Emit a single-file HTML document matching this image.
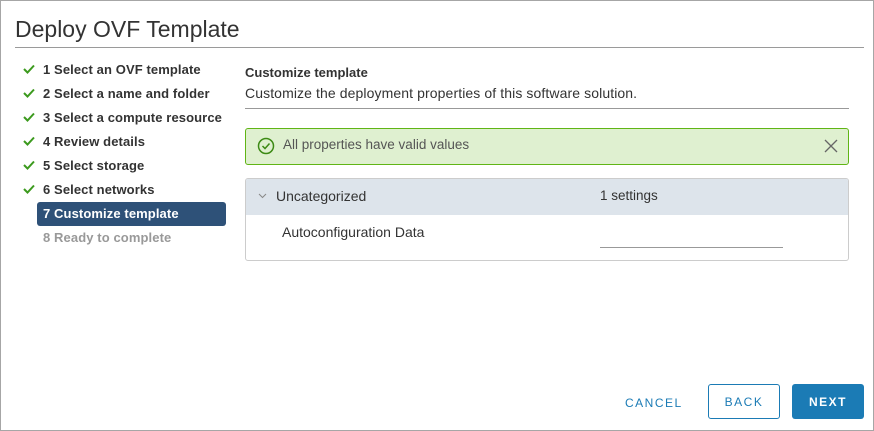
<!DOCTYPE html>
<html><head><style>
body{margin:0;width:874px;height:431px;font-family:"Liberation Sans",sans-serif;background:#fff;position:relative;overflow:hidden;color:#333}
.frame{position:absolute;left:0;top:0;width:872px;height:429px;border:1px solid #a6a6a6}
.abs{position:absolute;white-space:nowrap}
.step{position:absolute;left:43px;font-size:13px;color:#333;font-weight:bold;letter-spacing:0.1px}
.chk{position:absolute;left:23px}
</style></head><body>
<div class="frame"></div>
<div class="abs" style="left:15px;top:16px;font-size:23px;color:#333;">Deploy OVF Template</div>
<div class="abs" style="left:15px;top:47px;width:849px;height:1px;background:#9a9a9a"></div>

<div style="position:absolute;left:37px;top:202px;width:189px;height:24px;background:#2e5178;border-radius:3px"></div>
<svg class="chk" style="top:64px" width="12" height="10"><path d="M1 5 L4.5 8.5 L11 1.5" stroke="#3c9a1e" stroke-width="2" fill="none"/></svg>
<svg class="chk" style="top:88px" width="12" height="10"><path d="M1 5 L4.5 8.5 L11 1.5" stroke="#3c9a1e" stroke-width="2" fill="none"/></svg>
<svg class="chk" style="top:112px" width="12" height="10"><path d="M1 5 L4.5 8.5 L11 1.5" stroke="#3c9a1e" stroke-width="2" fill="none"/></svg>
<svg class="chk" style="top:136px" width="12" height="10"><path d="M1 5 L4.5 8.5 L11 1.5" stroke="#3c9a1e" stroke-width="2" fill="none"/></svg>
<svg class="chk" style="top:160px" width="12" height="10"><path d="M1 5 L4.5 8.5 L11 1.5" stroke="#3c9a1e" stroke-width="2" fill="none"/></svg>
<svg class="chk" style="top:184px" width="12" height="10"><path d="M1 5 L4.5 8.5 L11 1.5" stroke="#3c9a1e" stroke-width="2" fill="none"/></svg>
<div class="step" style="top:62px">1 Select an OVF template</div>
<div class="step" style="top:86px">2 Select a name and folder</div>
<div class="step" style="top:110px">3 Select a compute resource</div>
<div class="step" style="top:134px">4 Review details</div>
<div class="step" style="top:158px">5 Select storage</div>
<div class="step" style="top:182px">6 Select networks</div>
<div class="step" style="top:206px;color:#fff">7 Customize template</div>
<div class="step" style="top:230px;color:#999">8 Ready to complete</div>

<div class="abs" style="left:245px;top:65px;font-size:13px;font-weight:bold;color:#333">Customize template</div>
<div class="abs" style="left:245px;top:85px;font-size:14px;letter-spacing:0.1px;color:#333">Customize the deployment properties of this software solution.</div>
<div class="abs" style="left:245px;top:108px;width:604px;height:1px;background:#999"></div>

<div style="position:absolute;left:245px;top:128px;width:602px;height:35px;background:#dff0d0;border:1px solid #60b515;border-radius:3px"></div>
<svg class="abs" style="left:257px;top:137px" width="18" height="18"><circle cx="9" cy="9" r="7.5" stroke="#3c8a14" stroke-width="1.5" fill="none"/><path d="M5.5 9 L8 11.5 L12.5 6.5" stroke="#3c8a14" stroke-width="1.5" fill="none"/></svg>
<div class="abs" style="left:283px;top:137px;font-size:13.5px;color:#555">All properties have valid values</div>
<svg class="abs" style="left:824px;top:139px" width="14" height="14"><path d="M1 1 L13 13 M13 1 L1 13" stroke="#666" stroke-width="1.3"/></svg>

<div style="position:absolute;left:245px;top:178px;width:602px;height:81px;border:1px solid #ccc;border-radius:3px;overflow:hidden">
<div style="height:36px;background:#dde4eb"></div></div>
<svg class="abs" style="left:258px;top:193px" width="9" height="6"><path d="M1 1 L4.5 4.5 L8 1" stroke="#888" fill="none"/></svg>
<div class="abs" style="left:276px;top:188px;font-size:14px;color:#333">Uncategorized</div>
<div class="abs" style="left:600px;top:188px;font-size:13.5px;color:#333">1 settings</div>
<div class="abs" style="left:282px;top:224px;font-size:14px;color:#333">Autoconfiguration Data</div>
<div class="abs" style="left:600px;top:247px;width:183px;height:1px;background:#999"></div>

<div class="abs" style="left:625px;top:396px;font-size:12px;letter-spacing:1.5px;color:#1b7bb5">CANCEL</div>
<div style="position:absolute;left:708px;top:384px;width:70px;height:33px;border:1px solid #1b7bb5;border-radius:3px;color:#1b7bb5;font-size:12px;letter-spacing:1.5px;text-align:center;line-height:34px">BACK</div>
<div style="position:absolute;left:792px;top:384px;width:72px;height:35px;background:#1b7bb5;border-radius:3px;color:#fff;font-size:12px;font-weight:bold;letter-spacing:1.5px;text-align:center;line-height:36px">NEXT</div>
</body></html>
